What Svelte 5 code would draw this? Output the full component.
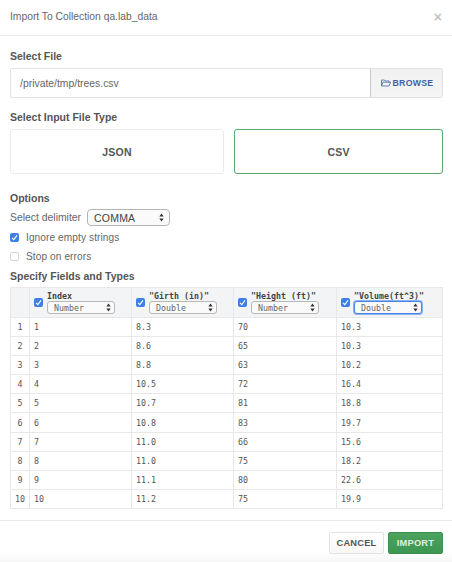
<script lang="ts">
  const fields = [
    { name: 'Index', type: 'Number' },
    { name: '"Girth (in)"', type: 'Double' },
    { name: '"Height (ft)"', type: 'Number' },
    { name: '"Volume(ft^3)"', type: 'Double', focused: true }
  ];

  const rows = [
    ['1', '8.3', '70', '10.3'],
    ['2', '8.6', '65', '10.3'],
    ['3', '8.8', '63', '10.2'],
    ['4', '10.5', '72', '16.4'],
    ['5', '10.7', '81', '18.8'],
    ['6', '10.8', '83', '19.7'],
    ['7', '11.0', '66', '15.6'],
    ['8', '11.0', '75', '18.2'],
    ['9', '11.1', '80', '22.6'],
    ['10', '11.2', '75', '19.9']
  ];
</script>

{#snippet arrows()}
  <svg class="arrows" width="5" height="9" viewBox="0 0 5 9">
    <path d="M2.5 0.5 L4.7 3.6 H0.3 Z M2.5 8.5 L4.7 5.4 H0.3 Z" fill="#333" />
  </svg>
{/snippet}

{#snippet tick()}
  <span class="check on">
    <svg width="9" height="9" viewBox="0 0 9 9">
      <path d="M2 4.8 L3.8 6.6 L7 2.4" fill="none" stroke="#fff" stroke-width="1.1" />
    </svg>
  </span>
{/snippet}

<div class="modal">
  <header class="head">
    <span class="title">Import To Collection qa.lab_data</span>
    <span class="close">×</span>
  </header>

  <div class="body">
    <div class="label file-label">Select File</div>
    <div class="file-row">
      <div class="file-input">/private/tmp/trees.csv</div>
      <div class="browse">
        <svg width="10" height="8" viewBox="0 0 10 8">
          <path d="M0.5 7 V1 H3.4 L4.2 2 H8 V3.2 M0.5 7 L2 3.2 H9.6 L8 7 Z" fill="none" stroke="#3f66ad" stroke-width="0.8" />
        </svg>
        BROWSE
      </div>
    </div>

    <div class="label type-label">Select Input File Type</div>
    <div class="types">
      <div class="type">JSON</div>
      <div class="type selected">CSV</div>
    </div>

    <div class="label options-label">Options</div>
    <div class="delimiter">
      <span>Select delimiter</span>
      <div class="delim-select">COMMA {@render arrows()}</div>
    </div>
    <div class="option first">{@render tick()}<span>Ignore empty strings</span></div>
    <div class="option"><span class="check"></span><span>Stop on errors</span></div>

    <div class="label specify-label">Specify Fields and Types</div>
    <table>
      <thead>
        <tr>
          <th class="num"></th>
          {#each fields as field}
            <th>
              <div class="field">
                {@render tick()}
                <div class="field-text">
                  <div class="field-name">{field.name}</div>
                  <div class="type-select" class:focused={field.focused}>{field.type} {@render arrows()}</div>
                </div>
              </div>
            </th>
          {/each}
        </tr>
      </thead>
      <tbody>
        {#each rows as row, i}
          <tr>
            <td class="num">{i + 1}</td>
            {#each row as cell}
              <td>{cell}</td>
            {/each}
          </tr>
        {/each}
      </tbody>
    </table>
  </div>

  <footer class="foot">
    <div class="btn cancel">CANCEL</div>
    <div class="btn import">IMPORT</div>
  </footer>
</div>

<style>
  :global(body) {
    margin: 0;
    background: #fff;
  }

  .modal {
    width: 452px;
    height: 562px;
    overflow: hidden;
    background: linear-gradient(#fff 552px, #f7f7f7);
    font-family: "Liberation Sans", Arial, sans-serif;
    color: #555;
    font-size: 10.5px;
  }

  .head {
    height: 36px;
    box-sizing: border-box;
    border-bottom: 1px solid #eaeaea;
    padding: 0 10px;
    display: flex;
    align-items: center;
    justify-content: space-between;
  }

  .title {
    color: #666;
    font-size: 10.3px;
    margin-bottom: 2px;
  }

  .close {
    color: #c4c4c4;
    font-size: 14px;
    font-weight: bold;
    line-height: 14px;
    margin-bottom: 2px;
  }

  .body {
    padding: 0 9px 0 10px;
  }

  .label {
    font-weight: bold;
    color: #555;
    font-size: 10.5px;
    line-height: 12px;
  }

  .file-label {
    margin-top: 14px;
  }

  .file-row {
    display: flex;
    height: 30px;
    margin-top: 6px;
    box-sizing: border-box;
    border: 1px solid #e2e2e2;
    border-radius: 2px;
  }

  .file-input {
    flex: 1;
    padding-left: 9px;
    display: flex;
    align-items: center;
    font-size: 10.4px;
    color: #666;
  }

  .browse {
    width: 72px;
    box-sizing: border-box;
    border-left: 1px solid #c8c8c8;
    padding-left: 1px;
    background: linear-gradient(#f1f1f1, #f5f5f5);
    display: flex;
    align-items: center;
    justify-content: center;
    gap: 2px;
    font-size: 8.7px;
    font-weight: bold;
    letter-spacing: 0.3px;
    color: #3f5fa6;
  }

  .type-label {
    margin-top: 13px;
  }

  .types {
    display: flex;
    gap: 10px;
    margin-top: 6px;
  }

  .type {
    height: 45px;
    box-sizing: border-box;
    flex: 0 0 214px;
    border: 1px solid #ececec;
    border-radius: 3px;
    display: flex;
    align-items: center;
    justify-content: center;
    font-weight: bold;
    font-size: 10.5px;
    letter-spacing: 0.2px;
    color: #555;
  }

  .type.selected {
    flex: 0 0 209px;
    border: 1.5px solid #58ab6c;
  }

  .options-label {
    margin-top: 18px;
  }

  .delimiter {
    display: flex;
    align-items: center;
    gap: 6px;
    margin-top: 5px;
    height: 17px;
    font-size: 10.4px;
    color: #666;
  }

  .delim-select {
    width: 83px;
    height: 17px;
    box-sizing: border-box;
    border: 1px solid #b4b4b4;
    border-radius: 4px;
    padding: 0 5px 0 6px;
    background: #fafafa;
    display: flex;
    align-items: center;
    justify-content: space-between;
    font-size: 10.5px;
    letter-spacing: 0.2px;
    color: #444;
  }

  .option {
    display: flex;
    align-items: center;
    gap: 7px;
    height: 12px;
    margin-top: 7px;
    color: #666;
    font-size: 10.1px;
    letter-spacing: 0.1px;
  }

  .option.first {
    margin-top: 5px;
  }

  .check {
    width: 9px;
    height: 9px;
    box-sizing: border-box;
    flex: none;
    border: 1px solid #d4d4d4;
    border-radius: 2px;
    background: #fff;
    display: inline-flex;
  }

  .check.on {
    border: none;
    background: #3d7fe6;
  }

  .specify-label {
    margin-top: 8px;
  }

  table {
    width: 433px;
    table-layout: fixed;
    margin-top: 5px;
    border-collapse: collapse;
    font-family: "DejaVu Sans Mono", "Liberation Mono", monospace;
    font-size: 8.3px;
    color: #555;
  }

  th,
  td {
    border: 1px solid #e8e8e8;
    padding: 0 0 0 4px;
    text-align: left;
    box-sizing: border-box;
  }

  thead tr {
    height: 30px;
    background: #f3f4f6;
  }

  tbody tr {
    height: 19.1px;
  }

  th:nth-child(1) {
    width: 19px;
  }

  th:nth-child(2),
  th:nth-child(3) {
    width: 102px;
  }

  th:nth-child(4) {
    width: 103px;
  }

  .num {
    padding: 0;
    text-align: center;
  }

  .field {
    display: flex;
    align-items: center;
    gap: 4px;
  }

  .field-text {
    flex: 1;
    min-width: 0;
  }

  .field-name {
    font-weight: bold;
    line-height: 10px;
    color: #444;
    white-space: nowrap;
  }

  .type-select {
    width: 68px;
    height: 13px;
    box-sizing: border-box;
    border: 1px solid #b8b8b8;
    border-radius: 3px;
    background: #fafafa;
    display: flex;
    align-items: center;
    justify-content: space-between;
    padding: 0 3px 0 6px;
    font-weight: normal;
    color: #666;
  }

  .type-select.focused {
    border-color: #4a86e8;
    box-shadow: 0 0 0 1px #8ab2f0;
  }

  .foot {
    margin-top: 11px;
    height: 42px;
    box-sizing: border-box;
    border-top: 1px solid #eaeaea;
    display: flex;
    justify-content: flex-end;
    align-items: flex-start;
    gap: 4px;
    padding: 11px 9px 0 0;
  }

  .btn {
    height: 22px;
    box-sizing: border-box;
    border-radius: 2px;
    display: flex;
    align-items: center;
    justify-content: center;
    font-size: 9.3px;
    font-weight: bold;
    letter-spacing: 0.2px;
  }

  .cancel {
    width: 55px;
    border: 1px solid #e2e2e2;
    background: linear-gradient(#fff, #f8f8f8);
    color: #555;
  }

  .import {
    width: 55px;
    border: 1px solid #3f8f52;
    background: linear-gradient(#4ba25f, #3e9653);
    color: #dcefe0;
  }

  .arrows {
    flex: none;
  }
</style>
